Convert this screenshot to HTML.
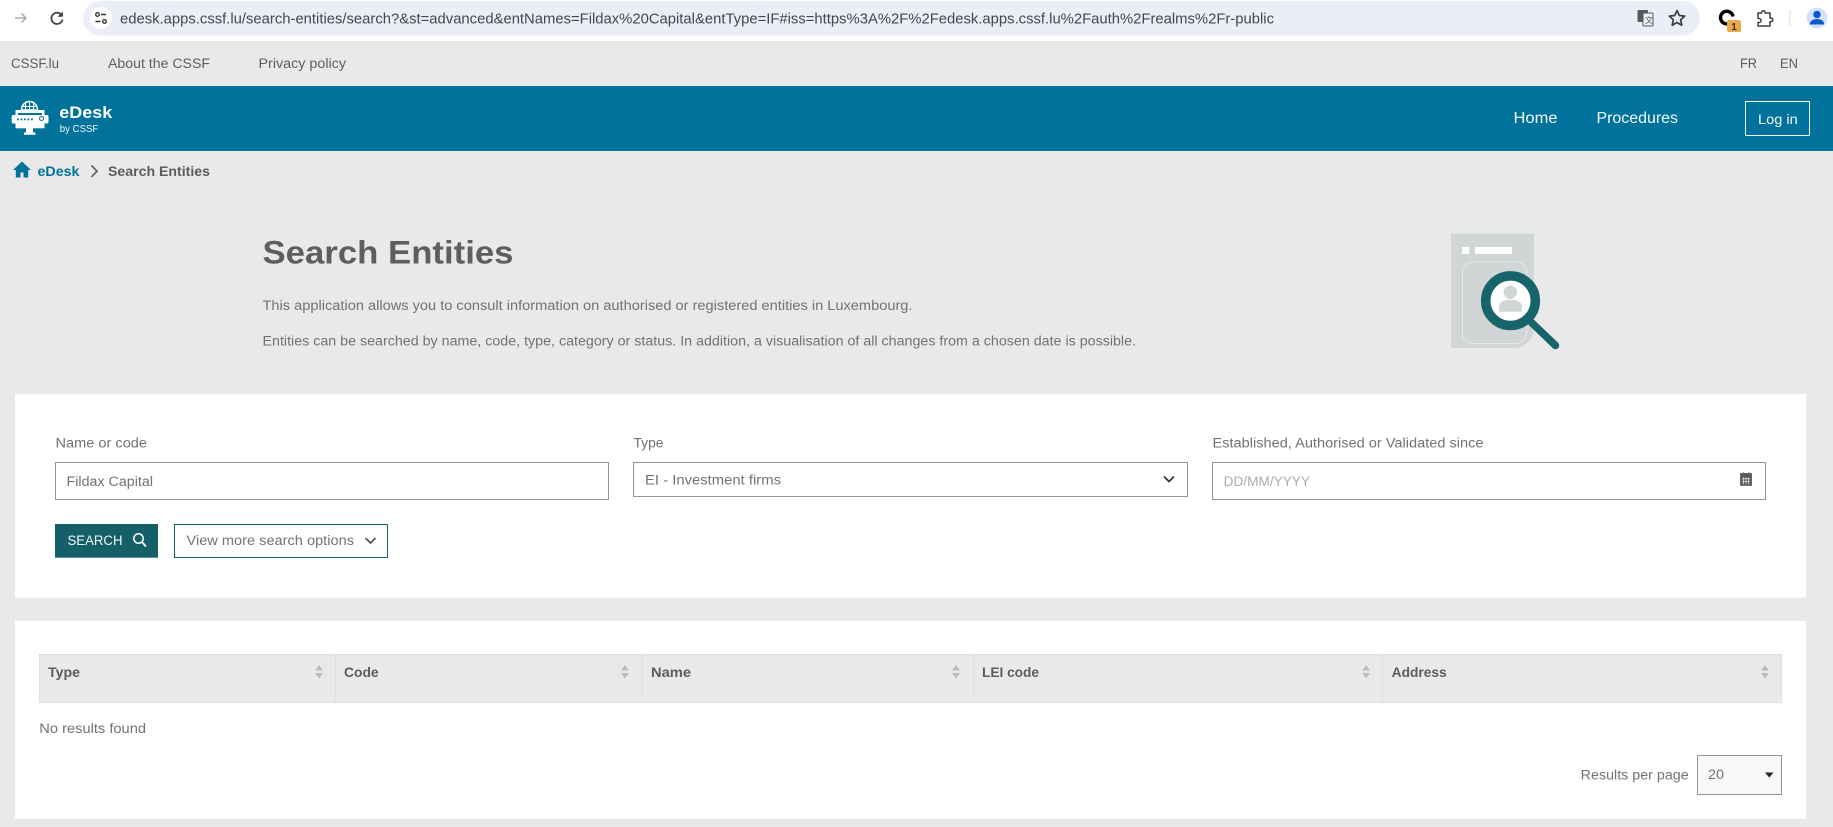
<!DOCTYPE html>
<html lang="en"><head><meta charset="utf-8"><title>Search Entities - eDesk</title>
<style>
html,body{margin:0;padding:0;width:1833px;height:827px;overflow:hidden;background:#e9e9e9}
svg{display:block}
text{font-family:"Liberation Sans",sans-serif;fill:#727272;font-size:13.500px}
.b{font-weight:700}
</style></head><body>
<svg width="1833" height="827" viewBox="0 0 1833 827" xmlns="http://www.w3.org/2000/svg">
<rect width="1833" height="827" fill="#e9e9e9"/>
<!-- Browser toolbar -->
<rect width="1833" height="41" fill="#fff"/>
<rect x="83" y="1" width="1617" height="34.500" rx="17.250" fill="#ebeef8"/>
<path d="M15 18H26M21.500 13.500L26 18l-4.500 4.500" fill="none" stroke="#a8aaad" stroke-width="1.500"/>
<path d="M61.500 15A5.600 5.600 0 1 0 62.500 19.500" fill="none" stroke="#3f4144" stroke-width="1.800"/><path d="M62.800 11.500v5.300h-5.300z" fill="#3f4144"/>
<circle cx="101" cy="18" r="11" fill="#fff"/>
<circle cx="97.500" cy="14.500" r="1.800" fill="none" stroke="#333" stroke-width="1.300"/><path d="M101 14.500h5M95.500 21.500h5" stroke="#333" stroke-width="1.500"/><circle cx="104.500" cy="21.500" r="1.800" fill="none" stroke="#333" stroke-width="1.300"/>
<text x="120" y="23.300" style="font-size:15px;fill:#45474a" textLength="1154" lengthAdjust="spacingAndGlyphs">edesk.apps.cssf.lu/search-entities/search?&amp;st=advanced&amp;entNames=Fildax%20Capital&amp;entType=IF#iss=https%3A%2F%2Fedesk.apps.cssf.lu%2Fauth%2Frealms%2Fr-public</text>
<!-- translate icon -->
<rect x="1637.500" y="10" width="10.500" height="12" rx="1" fill="#55575a"/><rect x="1643" y="13" width="10" height="13" rx="1" fill="#eef0f5" stroke="#55575a" stroke-width="1"/><text x="1645" y="23" style="font-size:8px;fill:#55575a">文</text>
<path d="M1677 10.500l2.300 5 5.400.6-4 3.700 1.100 5.400-4.800-2.700-4.800 2.700 1.100-5.400-4-3.700 5.400-.6z" fill="none" stroke="#3c3e41" stroke-width="1.700" stroke-linejoin="round"/>
<path d="M1730 23A6.300 6.300 0 1 1 1733 16.500" fill="none" stroke="#000" stroke-width="3.400"/>
<rect x="1727" y="20" width="14" height="12" rx="2" fill="#eea94c"/><text x="1734" y="30" text-anchor="middle" class="b" style="font-size:10px;fill:#333">1</text>
<path d="M1758 13h3.500v-.5a1.800 1.800 0 0 1 3.600 0v.5h4.900v5h1a1.800 1.800 0 0 1 0 3.600h-1V26h-12v-3.500h1a2 2 0 0 0 0-4h-1V13z" fill="none" stroke="#3c3e41" stroke-width="1.500" stroke-linejoin="round"/>
<rect x="1789.500" y="10" width="1" height="16" fill="#d3d9e5"/>
<circle cx="1817" cy="18" r="10.500" fill="#d3e3fd"/><circle cx="1817" cy="14.500" r="3.700" fill="#0b57d0"/><path d="M1809.800 24.500c0-3.800 3.400-5.500 7.200-5.500s7.200 1.700 7.200 5.500z" fill="#0b57d0"/>
<!-- top nav -->
<text x="11" y="68" style="font-size:13.500px;fill:#5e5e5e" textLength="48" lengthAdjust="spacingAndGlyphs">CSSF.lu</text>
<text x="108" y="68" style="font-size:13.500px;fill:#5e5e5e" textLength="102" lengthAdjust="spacingAndGlyphs">About the CSSF</text>
<text x="258.500" y="68" style="font-size:13.500px;fill:#5e5e5e" textLength="87.500" lengthAdjust="spacingAndGlyphs">Privacy policy</text>
<text x="1740" y="68" style="font-size:13.500px;fill:#5e5e5e" textLength="17" lengthAdjust="spacingAndGlyphs">FR</text>
<text x="1780" y="68" style="font-size:13.500px;fill:#5e5e5e" textLength="18" lengthAdjust="spacingAndGlyphs">EN</text>
<!-- header -->
<rect y="86" width="1833" height="65" fill="#00729b"/>
<g fill="#fff">
<path d="M21.500 110a8 8.500 0 0 1 16 0z" fill="none" stroke="#fff" stroke-width="1.500"/><path d="M29.500 102v8M25.500 103v7M33.500 103v7M22 106.500h15" stroke="#fff" stroke-width="1"/>
<rect x="15.500" y="110" width="29" height="2"/><path d="M15.500 111v4.500h2.500v-2.500h24v2.500h2.500V111z"/>
<rect x="11.700" y="115" width="36.800" height="8.500" rx="1.500"/>
<rect x="15.500" y="123" width="29" height="5.300"/>
<rect x="26" y="128" width="7" height="4.800"/><rect x="24" y="132.500" width="11.500" height="2.300"/>
</g>
<g fill="#00729b"><rect x="17" y="118.500" width="1.800" height="1.800"/><rect x="20.500" y="118.500" width="1.800" height="1.800"/><rect x="24" y="118.500" width="1.800" height="1.800"/><rect x="27.500" y="118.500" width="1.800" height="1.800"/><rect x="31" y="118.500" width="1.800" height="1.800"/><circle cx="41.500" cy="118.500" r="2" fill="none" stroke="#00729b" stroke-width="1"/></g>
<text x="59.300" y="118" class="b" style="font-size:16.500px;fill:#fff" textLength="53" lengthAdjust="spacingAndGlyphs">eDesk</text>
<text x="59.800" y="132" style="font-size:10px;fill:#eef6f9" textLength="38.500" lengthAdjust="spacingAndGlyphs">by CSSF</text>
<text x="1513.500" y="123" style="font-size:15.500px;fill:#f2fafc" textLength="44" lengthAdjust="spacingAndGlyphs">Home</text>
<text x="1596.500" y="123" style="font-size:15.500px;fill:#f2fafc" textLength="81.500" lengthAdjust="spacingAndGlyphs">Procedures</text>
<rect x="1745.500" y="101.500" width="64" height="34" fill="none" stroke="#f2fafc" stroke-width="1"/>
<text x="1758" y="124" style="font-size:13.500px;fill:#f2fafc" textLength="39.700" lengthAdjust="spacingAndGlyphs">Log in</text>
<!-- breadcrumb -->
<path d="M22 161.500L13 170h2.800v7.500h4.700v-5h3v5h4.700V170h2.800z" fill="#00729b"/>
<text x="37.500" y="176" class="b" style="font-size:13.500px;fill:#00729b" textLength="42" lengthAdjust="spacingAndGlyphs">eDesk</text>
<path d="M91.500 165.500l5.500 5.700-5.500 5.700" fill="none" stroke="#666" stroke-width="1.800"/>
<text x="108" y="176" class="b" style="font-size:13.500px;fill:#5c5c5c" textLength="102" lengthAdjust="spacingAndGlyphs">Search Entities</text>
<!-- intro -->
<text x="262.500" y="263.500" class="b" style="font-size:32.500px;fill:#5f5e5d" textLength="251" lengthAdjust="spacingAndGlyphs">Search Entities</text>
<text x="262.500" y="309.800" textLength="650" lengthAdjust="spacingAndGlyphs">This application allows you to consult information on authorised or registered entities in Luxembourg.</text>
<text x="262.500" y="345.400" textLength="873.500" lengthAdjust="spacingAndGlyphs">Entities can be searched by name, code, type, category or status. In addition, a visualisation of all changes from a chosen date is possible.</text>
<!-- illustration -->
<path d="M1451 233.800h83V328a20 20 0 0 1-20 20h-63z" fill="#d2d5d5"/>
<rect x="1462" y="247" width="7.300" height="7" fill="#fff"/><rect x="1475" y="247" width="37" height="7" fill="#fff"/>
<rect x="1462.500" y="262" width="64" height="81.500" rx="10" fill="none" stroke="#e6e8e8" stroke-width="1"/>
<path d="M1531.700 322.700L1555.500 345.500" stroke="#17646b" stroke-width="7.500" stroke-linecap="round"/>
<circle cx="1510.500" cy="300.700" r="24.800" fill="#fff" stroke="#17646b" stroke-width="9.500"/>
<circle cx="1510.300" cy="292.300" r="6.700" fill="#d2d5d5"/><path d="M1499 311.700v-5c0-5 5-7 11.300-7s11.700 2 11.700 7v5z" fill="#d2d5d5"/>
<!-- search card -->
<rect x="15" y="394" width="1791" height="203.700" fill="#fff"/>
<text x="55.500" y="447.500" textLength="91.500" lengthAdjust="spacingAndGlyphs">Name or code</text>
<rect x="55.500" y="462.500" width="553" height="37" fill="#fff" stroke="#949494" stroke-width="1"/>
<text x="66.500" y="486" textLength="86.500" lengthAdjust="spacingAndGlyphs">Fildax Capital</text>
<text x="633.500" y="447.500" textLength="30" lengthAdjust="spacingAndGlyphs">Type</text>
<rect x="633.500" y="462.500" width="554" height="34" fill="#fff" stroke="#949494" stroke-width="1"/>
<text x="645" y="484.300" textLength="136" lengthAdjust="spacingAndGlyphs">EI - Investment firms</text>
<path d="M1164 476.500l5 5 5-5" fill="none" stroke="#333" stroke-width="1.700"/>
<text x="1212.500" y="447.500" textLength="271" lengthAdjust="spacingAndGlyphs">Established, Authorised or Validated since</text>
<rect x="1212.500" y="462.500" width="553" height="37" fill="#fff" stroke="#949494" stroke-width="1"/>
<text x="1223.700" y="486" style="font-size:13.500px;fill:#adadad" textLength="86.300" lengthAdjust="spacingAndGlyphs">DD/MM/YYYY</text>
<path d="M1740.500 476h11v9.500h-11zM1740.500 476v-2.500h11v2.500zM1743 472v2M1749 472v2" fill="#5a5a5a" stroke="#5a5a5a" stroke-width=".8"/><path d="M1742 478.800h8M1742 481.500h8M1743.500 477.500v7M1746 477.500v7M1748.500 477.500v7" stroke="#fff" stroke-width=".6"/>
<rect x="55" y="524" width="103" height="33.700" fill="#155f69"/>
<text x="67.500" y="545" style="font-size:13.500px;fill:#f4f9fa" textLength="55" lengthAdjust="spacingAndGlyphs">SEARCH</text>
<circle cx="138.500" cy="538.500" r="4.700" fill="none" stroke="#fff" stroke-width="1.500"/><path d="M142 542l4 4.500" stroke="#fff" stroke-width="1.700"/>
<rect x="174.500" y="524.500" width="213" height="33" fill="#fff" stroke="#155f69" stroke-width="1"/>
<text x="186.500" y="545" textLength="167.500" lengthAdjust="spacingAndGlyphs">View more search options</text>
<path d="M365.500 538l5 5 5-5" fill="none" stroke="#555" stroke-width="1.800"/>
<!-- results card -->
<rect x="15" y="621" width="1791" height="197.700" fill="#fff"/>
<rect x="39.500" y="654.500" width="1742" height="48" fill="#e9e9e9" stroke="#dfdfdf" stroke-width="1"/>
<path d="M335.500 655v47M642.500 655v47M973.500 655v47M1382.500 655v47" stroke="#e0e0e0" stroke-width="1"/>
<text x="48" y="677" class="b" style="font-size:13.500px;fill:#5e5c5b" textLength="32" lengthAdjust="spacingAndGlyphs">Type</text>
<text x="344" y="677" class="b" style="font-size:13.500px;fill:#5e5c5b" textLength="34.600" lengthAdjust="spacingAndGlyphs">Code</text>
<text x="651" y="677" class="b" style="font-size:13.500px;fill:#5e5c5b" textLength="40" lengthAdjust="spacingAndGlyphs">Name</text>
<text x="982" y="677" class="b" style="font-size:13.500px;fill:#5e5c5b" textLength="57" lengthAdjust="spacingAndGlyphs">LEI code</text>
<text x="1391.700" y="677" class="b" style="font-size:13.500px;fill:#5e5c5b" textLength="55" lengthAdjust="spacingAndGlyphs">Address</text>
<g fill="#bcbcbc">
<path d="M319 665l4 5.500h-8zM319 678.500l4-5.500h-8z"/>
<path d="M625 665l4 5.500h-8zM625 678.500l4-5.500h-8z"/>
<path d="M956 665l4 5.500h-8zM956 678.500l4-5.500h-8z"/>
<path d="M1366 665l4 5.500h-8zM1366 678.500l4-5.500h-8z"/>
<path d="M1765 665l4 5.500h-8zM1765 678.500l4-5.500h-8z"/>
</g>
<text x="39.300" y="733" textLength="106.700" lengthAdjust="spacingAndGlyphs">No results found</text>
<text x="1580.700" y="779.300" textLength="108" lengthAdjust="spacingAndGlyphs">Results per page</text>
<rect x="1697.500" y="755.500" width="84" height="39" fill="#f8f8f8" stroke="#949494" stroke-width="1"/>
<text x="1708" y="779" textLength="16" lengthAdjust="spacingAndGlyphs">20</text>
<path d="M1765 772.500h8.500l-4.250 5z" fill="#222"/>
</svg>
</body></html>
